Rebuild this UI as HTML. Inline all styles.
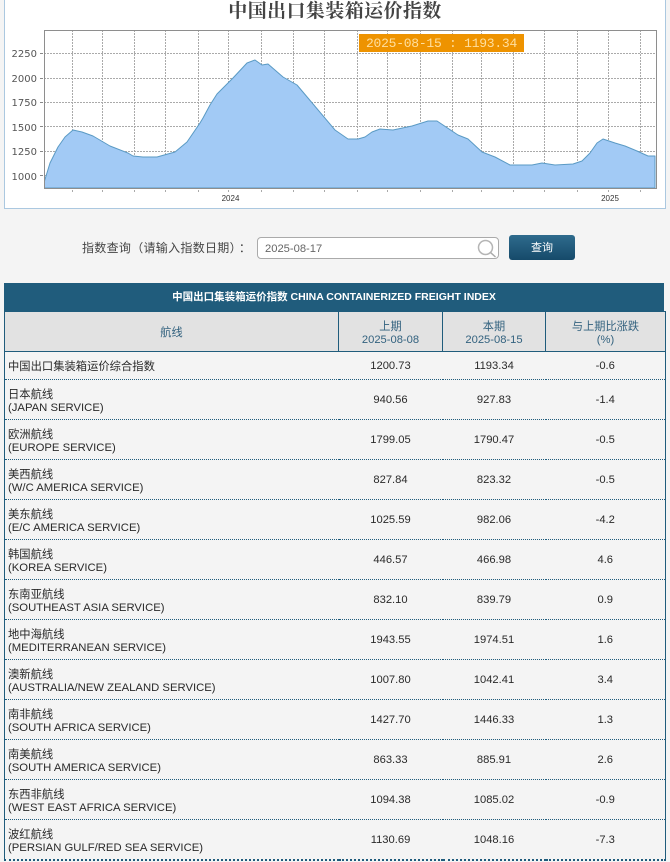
<!DOCTYPE html>
<html lang="zh">
<head>
<meta charset="utf-8">
<title>中国出口集装箱运价指数</title>
<style>
html,body{margin:0;padding:0;width:670px;height:862px;overflow:hidden;background:#f4f4f4}
body{position:relative;font-family:"Liberation Sans","Noto Sans CJK SC",sans-serif;font-size:11.2px;color:#333}
.chartbox{position:absolute;left:4px;top:-2px;width:660px;height:209px;background:#fff;border:1px solid #abc8e0}
svg{position:absolute;left:0;top:0}
.q{position:absolute;left:82px;top:240px;font-size:12px;letter-spacing:.3px;line-height:16px;color:#444;white-space:nowrap}
.q span{margin-left:3px}
.inp{position:absolute;left:257px;top:237px;width:240px;height:20px;border:1px solid #aaa;border-radius:4px;background:#fff;color:#666;font-size:11.2px;line-height:22px;text-indent:7px}
.btn{position:absolute;left:509px;top:235px;width:66px;height:25px;border-radius:3px;background:linear-gradient(#2f6b8d,#164a6a);color:#fff;font-size:11px;line-height:27px;text-align:center}
.tt{position:absolute;left:4px;top:283px;width:660px;height:30px;background:#205c7c;color:#fff;font-size:10.5px;font-weight:bold;line-height:28px;text-align:center}
table{position:absolute;left:4px;top:311px;width:661px;border-collapse:collapse;table-layout:fixed;background:#f4f4f4}
th,td{padding:0;text-align:center;font-weight:normal;font-size:11.2px;line-height:13px}
th{height:35px;padding-top:4px;background:#e2e2e2;color:#33627f;border:1px solid #205c7c;border-top:1px solid #205c7c}
td{height:37px;padding-top:2px;border-bottom:1px dotted #205c7c;color:#2a2a2a}
td:first-child{text-align:left;height:35px;padding:4px 0 0 3px;border-left:1px solid #205c7c;font-size:11.3px}
td:last-child{border-right:1px solid #205c7c}
tr.a td{height:25px}
tr.a td:first-child{height:23px}
tr.last td{border-bottom:2px dotted #205c7c}
</style>
</head>
<body>
<div class="chartbox"></div>
<svg width="670" height="215" viewBox="0 0 670 215">
<text x="335" y="17" text-anchor="middle" font-family="'Liberation Serif','Noto Serif CJK SC',serif" font-size="19" font-weight="bold" letter-spacing="0.4" fill="#444">中国出口集装箱运价指数</text>
<g stroke="#aaa" stroke-width="1" stroke-dasharray="2 1" fill="none">
<path d="M44 53.500H656M44 78.500H656M44 102.500H656M44 126.500H656M44 151.500H656M44 175.500H656"/>
<path d="M72.500 30V188M102.500 30V188M134.500 30V188M165.500 30V188M198.500 30V188M228.500 30V188M261.500 30V188M293.500 30V188M324.500 30V188M357.500 30V188M387.500 30V188M420.500 30V188M452.500 30V188M481.500 30V188M513.500 30V188M544.500 30V188M577.500 30V188M608.500 30V188M640.500 30V188"/>
</g>
<path d="M44.500 188L44.500 181L50 163L58 147L65 137L73 130L82 132L93 136L110 146L128 153L133 156L143 157L157 157L175 152L187 142L200 123L203 118L210 105L217 94L233 78L247 63L255 60L262 65L268 64L283 77L297 85L335 130L348 139L358 139L365 137L372 132L380 129L393 130L412 126L428 121L437 121L458 135L468 139L482 152L495 157L510 165L532 165L542 163L555 165L573 164L582 161L590 153L597 143L603 139L615 143L625 146L637 151L648 156L655 156L655 188Z" fill="#a2caf5" stroke="#5a9ac4" stroke-width="1" stroke-linejoin="round"/>
<rect x="44.500" y="30.500" width="612" height="158" fill="none" stroke="#8e8e8e" stroke-width="1"/>
<path d="M40 53.500H43M40 78.500H43M40 102.500H43M40 126.500H43M40 151.500H43M40 175.500H43" stroke="#888" stroke-width="1" fill="none"/>
<g stroke="#aaa" stroke-width="1" stroke-dasharray="2 1" fill="none">
<path d="M72.500 190V193M102.500 190V193M134.500 190V193M165.500 190V193M198.500 190V193M228.500 190V193M261.500 190V193M293.500 190V193M324.500 190V193M357.500 190V193M387.500 190V193M420.500 190V193M452.500 190V193M481.500 190V193M513.500 190V193M544.500 190V193M577.500 190V193M608.500 190V193M640.500 190V193"/>
</g>
<g font-family="'DejaVu Sans',sans-serif" font-size="10" fill="#555" text-anchor="end">
<text x="37" y="57">2250</text><text x="37" y="82">2000</text><text x="37" y="106">1750</text><text x="37" y="131">1500</text><text x="37" y="155">1250</text><text x="37" y="180">1000</text>
</g>
<g font-family="'Liberation Sans',sans-serif" font-size="8" fill="#333" text-anchor="middle">
<text x="230.500" y="201">2024</text><text x="610" y="201">2025</text>
</g>
<rect x="359" y="34" width="165" height="18" fill="#ee9300"/>
<text x="441.500" y="47" text-anchor="middle" font-family="'Liberation Mono',monospace" font-size="13" letter-spacing="-0.25" fill="#ffdf9f">2025-08-15 : 1193.34</text>
</svg>
<div class="q">指数查询（请输入指数日期）<span>：</span></div>
<div class="inp">2025-08-17</div>
<svg style="left:476px;top:238px" width="24" height="20" viewBox="0 0 24 20"><circle cx="9.500" cy="9.500" r="7" fill="#fff" stroke="#b5b5b5" stroke-width="1.500"/><path d="M14.500 14.500L19.500 19" stroke="#aaa" stroke-width="1.500" fill="none"/></svg>
<div class="btn">查询</div>
<div class="tt">中国出口集装箱运价指数 CHINA CONTAINERIZED FREIGHT INDEX</div>
<table>
<colgroup><col style="width:334px"><col style="width:104px"><col style="width:103px"><col style="width:120px"></colgroup>
<tr><th>航线</th><th>上期<br>2025-08-08</th><th>本期<br>2025-08-15</th><th>与上期比涨跌<br>(%)</th></tr>
<tr class="a"><td>中国出口集装箱运价综合指数</td><td>1200.73</td><td>1193.34</td><td>-0.6</td></tr>
<tr><td>日本航线<br>(JAPAN SERVICE)</td><td>940.56</td><td>927.83</td><td>-1.4</td></tr>
<tr><td>欧洲航线<br>(EUROPE SERVICE)</td><td>1799.05</td><td>1790.47</td><td>-0.5</td></tr>
<tr><td>美西航线<br>(W/C AMERICA SERVICE)</td><td>827.84</td><td>823.32</td><td>-0.5</td></tr>
<tr><td>美东航线<br>(E/C AMERICA SERVICE)</td><td>1025.59</td><td>982.06</td><td>-4.2</td></tr>
<tr><td>韩国航线<br>(KOREA SERVICE)</td><td>446.57</td><td>466.98</td><td>4.6</td></tr>
<tr><td>东南亚航线<br>(SOUTHEAST ASIA SERVICE)</td><td>832.10</td><td>839.79</td><td>0.9</td></tr>
<tr><td>地中海航线<br>(MEDITERRANEAN SERVICE)</td><td>1943.55</td><td>1974.51</td><td>1.6</td></tr>
<tr><td>澳新航线<br>(AUSTRALIA/NEW ZEALAND SERVICE)</td><td>1007.80</td><td>1042.41</td><td>3.4</td></tr>
<tr><td>南非航线<br>(SOUTH AFRICA SERVICE)</td><td>1427.70</td><td>1446.33</td><td>1.3</td></tr>
<tr><td>南美航线<br>(SOUTH AMERICA SERVICE)</td><td>863.33</td><td>885.91</td><td>2.6</td></tr>
<tr><td>东西非航线<br>(WEST EAST AFRICA SERVICE)</td><td>1094.38</td><td>1085.02</td><td>-0.9</td></tr>
<tr class="last"><td>波红航线<br>(PERSIAN GULF/RED SEA SERVICE)</td><td>1130.69</td><td>1048.16</td><td>-7.3</td></tr>
</table>
</body>
</html>
